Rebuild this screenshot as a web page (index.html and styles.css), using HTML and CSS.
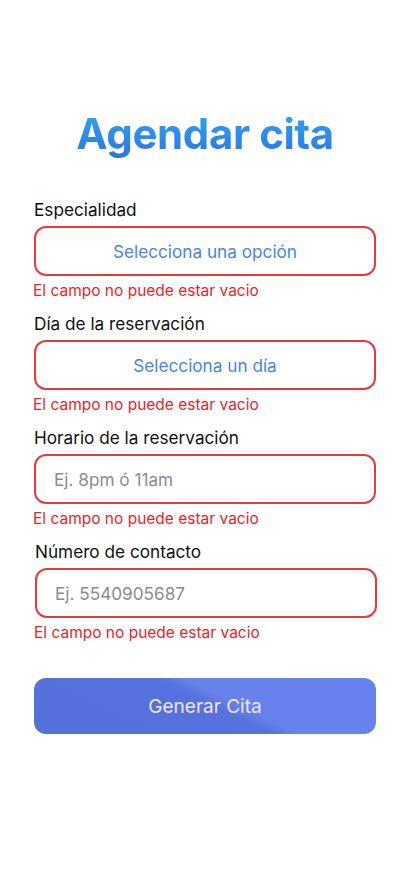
FILE: index.html
```html
<!DOCTYPE html>
<html lang="es">
<head>
<meta charset="utf-8">
<title>Agendar cita</title>
<link rel="stylesheet" href="styles.css">
</head>
<body>
<main class="page">
  <h1 class="title">Agendar cita</h1>
  <form class="form">
    <div class="field">
      <label class="label">Especialidad</label>
      <div class="control select">Selecciona una opción</div>
      <p class="error">El campo no puede estar vacio</p>
    </div>
    <div class="field">
      <label class="label">Día de la reservación</label>
      <div class="control select">Selecciona un día</div>
      <p class="error">El campo no puede estar vacio</p>
    </div>
    <div class="field">
      <label class="label">Horario de la reservación</label>
      <input class="control input" type="text" placeholder="Ej. 8pm ó 11am">
      <p class="error">El campo no puede estar vacio</p>
    </div>
    <div class="field shifted">
      <label class="label">Número de contacto</label>
      <input class="control input" type="text" placeholder="Ej. 5540905687">
      <p class="error">El campo no puede estar vacio</p>
    </div>
    <button class="submit" type="button">Generar Cita</button>
  </form>
</main>
</body>
</html>
```
FILE: styles.css
```css
* { box-sizing: border-box; }
html, body { margin: 0; padding: 0; background: #fff; }
body { font-family: Inter, "Noto Sans", sans-serif; }
.page { padding: 104px 33px 0 34px; }
.title {
  margin: 0;
  text-align: center;
  font-size: 42px;
  font-weight: 700;
  line-height: 60px;
  letter-spacing: -0.4px;
  background: linear-gradient(180deg, #33abf6 0%, #2b6fdf 100%);
  -webkit-background-clip: text;
  background-clip: text;
  color: transparent;
}
.form { margin-top: 36px; display: flex; flex-direction: column; }
.field { display: flex; flex-direction: column; margin-bottom: 14px; }
.field.shifted { padding-left: 1px; margin-right: -1px; }
.label { font-size: 17.2px; line-height: 20px; color: #111; }
.control {
  margin-top: 6px;
  height: 50px;
  border: 2px solid #e8393f;
  border-radius: 12px;
  background: #fff;
  font-family: Inter, "Noto Sans", sans-serif;
  font-size: 17.2px;
}
.select {
  display: flex; align-items: center; justify-content: center;
  color: #4a86e2;
}
.input {
  width: 100%;
  padding: 0 18px;
  outline: none;
  color: #333;
}
.input::placeholder { color: #8c8c8c; }
.error { margin: 6px 0 0; margin-left: -1px; font-size: 15.5px; line-height: 18px; color: #e5262b; }
.submit {
  margin-top: 22px;
  height: 56px;
  border: none;
  border-radius: 12px;
  background: linear-gradient(26deg, #5470da 0%, #5672de 52%, #6682ec 58%, #6782ee 100%);
  color: #f5e2ec;
  font-family: Inter, "Noto Sans", sans-serif;
  font-size: 19px;
}
```
